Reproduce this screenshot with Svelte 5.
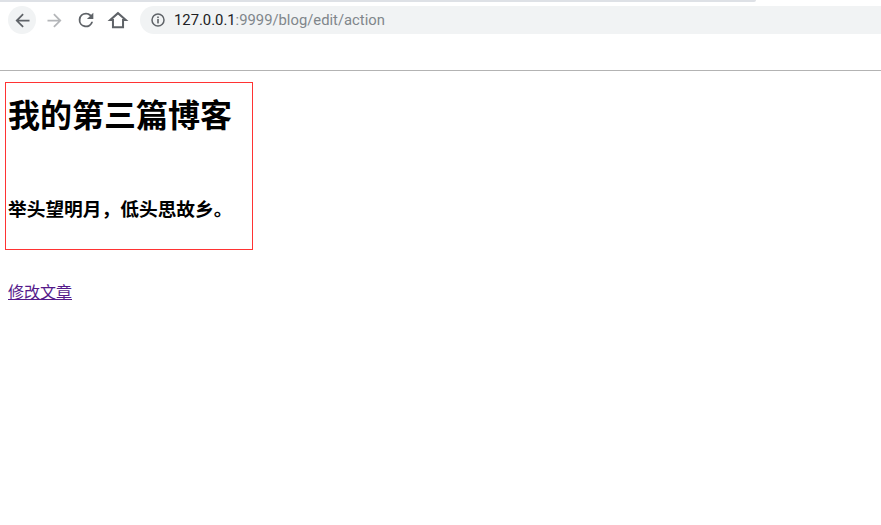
<script>
  const title = '我的第三篇博客';
  const line = '举头望明月，低头思故乡。';
</script>

<div class="page">
  <div class="strip"></div>
  <div class="toolbar">
    <button class="nav back" aria-label="back">
      <svg viewBox="0 0 24 24" width="21" height="21"><path d="M20 11H7.83l5.59-5.59L12 4l-8 8 8 8 1.41-1.41L7.83 13H20z" fill="#5f6368"/></svg>
    </button>
    <button class="nav" aria-label="forward">
      <svg viewBox="0 0 24 24" width="21" height="21"><path d="M12 4l-1.41 1.41L16.17 11H4v2h12.17l-5.58 5.59L12 20l8-8z" fill="#b4b6b9"/></svg>
    </button>
    <button class="nav" aria-label="reload">
      <svg viewBox="0 0 24 24" width="22" height="22"><path d="M17.65 6.35A7.96 7.96 0 0 0 12 4a8 8 0 1 0 7.75 10h-2.08A6 6 0 1 1 12 6c1.66 0 3.14.69 4.22 1.78L13 11h7V4z" fill="#5f6368"/></svg>
    </button>
    <button class="nav home" aria-label="home">
      <svg viewBox="0 0 24 24" width="22" height="22"><path d="M12 4.5 3.5 12H6.5v8h11v-8h3z" fill="none" stroke="#5f6368" stroke-width="2.2" stroke-linejoin="miter"/></svg>
    </button>
    <div class="omnibox">
      <svg class="info" viewBox="0 0 16 16" width="16" height="16"><circle cx="8" cy="8" r="6" fill="none" stroke="#5f6368" stroke-width="1.5"/><rect x="7.2" y="7" width="1.6" height="4.4" fill="#5f6368"/><rect x="7.2" y="4.5" width="1.6" height="1.6" fill="#5f6368"/></svg>
      <span class="url"><span class="host">127.0.0.1</span>:9999/blog/edit/action</span>
    </div>
  </div>
  <div class="bookmarks"></div>

  <main>
    <section class="post">
      <h1>{title}</h1>
      <h3>{line}</h3>
    </section>
    <p class="edit"><a href="#edit">修改文章</a></p>
  </main>
</div>

<style>
  :global(body) {
    margin: 0;
    background: #fff;
  }
  .page {
    font-family: "Liberation Sans", "Noto Sans CJK SC", sans-serif;
    color: #000;
    min-height: 525px;
  }
  .strip {
    width: 756px;
    height: 2px;
    background: #dee1e6;
    border-bottom-right-radius: 3px;
  }
  .toolbar {
    display: flex;
    align-items: center;
    height: 28px;
    margin-top: 4px;
    padding-left: 8px;
  }
  .nav {
    width: 28px;
    height: 28px;
    margin-right: 4px;
    padding: 0;
    border: 0;
    border-radius: 50%;
    background: transparent;
    display: flex;
    align-items: center;
    justify-content: center;
  }
  .back {
    background: #f1f3f4;
  }
  .home {
    margin-right: 8px;
  }
  .omnibox {
    flex: 1;
    height: 28px;
    display: flex;
    align-items: center;
    gap: 8px;
    padding-left: 10px;
    background: #f1f3f4;
    border-radius: 14px 0 0 14px;
  }
  .url {
    font-family: "Roboto", "Liberation Sans", sans-serif;
    font-size: 14.8px;
    color: #80868b;
  }
  .host {
    color: #202124;
  }
  .bookmarks {
    height: 36px;
    border-bottom: 1px solid #b3b3b3;
  }
  main {
    padding: 11px 5px 0;
  }
  .post {
    width: 242px;
    height: 162px;
    padding: 2px;
    border: 1px solid #f33;
    box-sizing: content-box;
  }
  h1 {
    margin: 0;
    padding-top: 10px;
    font-size: 32px;
    line-height: 42px;
    font-weight: bold;
    white-space: nowrap;
  }
  h3 {
    margin: 0;
    padding-top: 60px;
    font-size: 18.72px;
    line-height: 26px;
    font-weight: bold;
    white-space: nowrap;
  }
  .edit {
    margin: 31px 0 0 3px;
    font-size: 16px;
    line-height: 24px;
  }
  a {
    color: #551a8b;
  }
</style>
